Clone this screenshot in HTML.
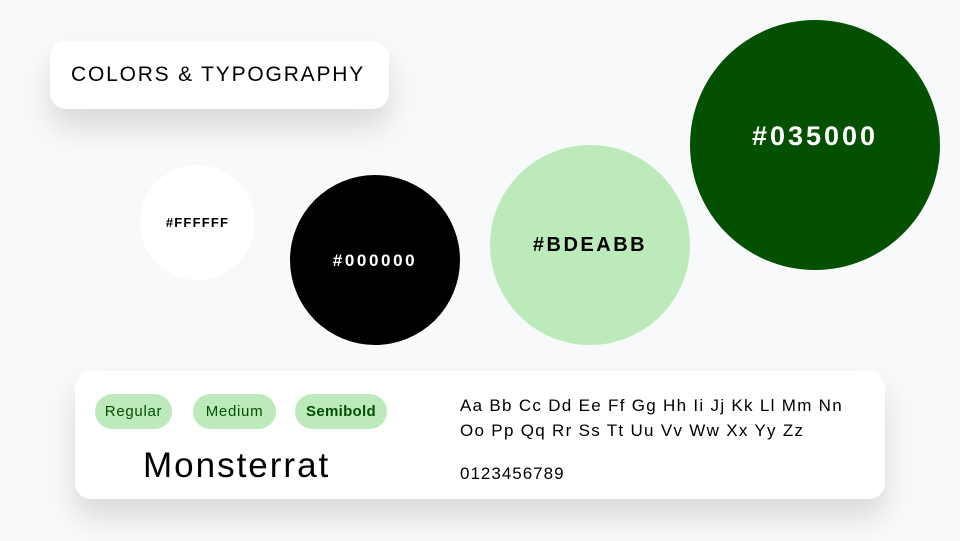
<!DOCTYPE html>
<html><head><meta charset="utf-8"><style>
*{margin:0;padding:0;box-sizing:border-box}
body{width:960px;height:541px;background:#f8f9fb;position:relative;overflow:hidden;font-family:"Liberation Sans",sans-serif;color:#000}
.abs{position:absolute}
.card{background:#fff;border-radius:16px;box-shadow:0 18px 30px rgba(0,0,0,0.13)}
.c{position:absolute;border-radius:50%;display:flex;align-items:center;justify-content:center}
.pill{position:absolute;top:394px;height:35px;border-radius:18px;background:#bdeabb;color:#035000;font-size:15px;letter-spacing:0.7px;display:flex;align-items:center;justify-content:center}
.t{position:absolute;white-space:nowrap}
</style></head><body>
<div class="abs card" style="left:50px;top:41px;width:339px;height:68px"></div>
<div class="t" style="left:71px;top:63px;font-size:21px;letter-spacing:1.8px">COLORS &amp; TYPOGRAPHY</div>

<div class="c" style="left:140px;top:165px;width:115px;height:115px;background:#fff;font-size:13px;font-weight:bold;letter-spacing:1.2px">#FFFFFF</div>
<div class="c" style="left:290px;top:175px;width:170px;height:170px;background:#000;color:#fff;font-size:17px;font-weight:bold;letter-spacing:2.6px;padding-top:2px">#000000</div>
<div class="c" style="left:490px;top:145px;width:200px;height:200px;background:#bdeabb;font-size:20px;font-weight:bold;letter-spacing:2.5px">#BDEABB</div>
<div class="c" style="left:690px;top:20px;width:250px;height:250px;background:#035000;color:#fff;font-size:27px;font-weight:bold;letter-spacing:3px;padding-bottom:18px">#035000</div>

<div class="abs card" style="left:75px;top:371px;width:810px;height:128px"></div>
<div class="pill" style="left:95px;width:77px">Regular</div>
<div class="pill" style="left:193px;width:83px">Medium</div>
<div class="pill" style="left:295px;width:92px;font-weight:bold;letter-spacing:0.3px">Semibold</div>
<div class="t" style="left:143px;top:446px;font-size:35px;letter-spacing:2px">Monsterrat</div>
<div class="t" style="left:460px;top:393px;font-size:17px;line-height:25px;letter-spacing:1.3px">Aa Bb Cc Dd Ee Ff Gg Hh Ii Jj Kk Ll Mm Nn<br>Oo Pp Qq Rr Ss Tt Uu Vv Ww Xx Yy Zz</div>
<div class="t" style="left:460px;top:464px;font-size:17px;letter-spacing:1px">0123456789</div>
</body></html>
